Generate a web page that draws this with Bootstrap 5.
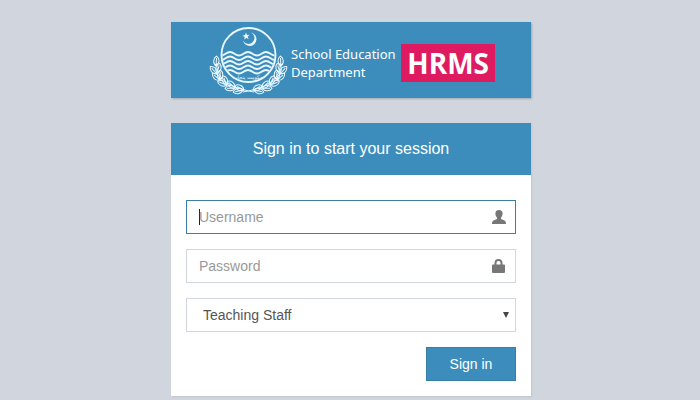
<!DOCTYPE html>
<html lang="en">
<head>
<meta charset="utf-8">
<meta name="viewport" content="width=device-width, initial-scale=1">
<title>School Education Department HRMS - Sign in</title>
<link href="https://cdn.jsdelivr.net/npm/bootstrap@5.3.0/dist/css/bootstrap.min.css" rel="stylesheet">
<style>
  body { background: #d1d6de; font-family: "Liberation Sans", Arial, sans-serif; font-size: 14px; color: #555; }
  .login-page { padding: 22px 0 4px 2px; }
  .login-box { max-width: 360px; gap: 25px; }
  .brand-bar { background: #3c8dbc; color: #fff; min-height: 76px; padding: 4px 36px 2px 38px; box-shadow: 1px 1px 2px #a0a8b2; }
  .brand-name { font: 13px/18px "Noto Sans", "Open Sans", sans-serif; flex: 1; padding: 4px 0 0 1px; white-space: nowrap; }
  .brand-tag { background: #de1a60; font: bold 28px/38px "Open Sans", sans-serif; padding: 0 6px; margin-top: 4px; }
  .login-title { background: #3c8dbc; color: #fff; font-size: 16px; line-height: 20px; padding: 16px; }
  .login-card { box-shadow: 1px 1px 2px #c0c6ce; }
  .login-form { padding: 25px 15px 15px; gap: 15px; }
  .login-form .form-control, .login-form .form-select { height: 34px; border-radius: 0; border-color: #d2d6de; font-size: 14px; line-height: 20px; padding: 6px 12px; color: #555; box-shadow: none; }
  .login-form .form-control { padding-right: 40px; caret-color: #222; }
  .login-form .form-control:focus { border-color: #3c7fa6; }
  .login-form .form-control:focus:placeholder-shown { caret-color: transparent; background: linear-gradient(#222, #222) 12px center / 1px 16px no-repeat #fff; }
  .login-form .form-control::placeholder { color: #999; }
  .login-form .form-select { padding-left: 16px; background-image: none; }
  .field-icon { right: 10px; width: 14px; height: 14px; color: #777; }
  .select-arrow { right: 7px; width: 6px; height: 6px; color: #444; }
  .field-icon svg, .select-arrow svg { display: block; width: 100%; height: 100%; }
  .btn-login { --bs-btn-bg: #3c8dbc; --bs-btn-border-color: #367fa9; --bs-btn-color: #fff; --bs-btn-hover-bg: #367fa9; --bs-btn-hover-color: #fff; width: 90px; height: 34px; padding: 6px 12px; font-size: 14px; line-height: 20px; }
</style>
<script src="https://cdn.jsdelivr.net/npm/bootstrap@5.3.0/dist/js/bootstrap.bundle.min.js"></script>
</head>
<body>
<main class="login-page">
  <div class="login-box mx-auto d-flex flex-column">
    <header class="brand-bar d-flex align-items-center">
      <svg class="flex-shrink-0" width="81" height="70" viewBox="0 0 81 70" fill="none" stroke="#e9f7ff" role="img" aria-label="Government of the Punjab emblem">
        <defs>
          <path id="leaf" d="M0 0C-4-3-3-8 0-10C3-8 4-3 0 0ZM0 0V-8" stroke-width="1"/>
          <g id="branch">
            <path d="M8 37C7 49 15 61 45 66" stroke-width="1"/>
            <use href="#leaf" transform="translate(7 40) rotate(4)"/>
            <use href="#leaf" transform="translate(8 48) rotate(-42)"/>
            <use href="#leaf" transform="translate(8 47) rotate(16)"/>
            <use href="#leaf" transform="translate(11 54) rotate(-50)"/>
            <use href="#leaf" transform="translate(11 54) rotate(2)"/>
            <use href="#leaf" transform="translate(18 59) rotate(-70)"/>
            <use href="#leaf" transform="translate(18 59) rotate(-24)"/>
            <use href="#leaf" transform="translate(26 62) rotate(-92)"/>
            <use href="#leaf" transform="translate(26 62) rotate(-48)"/>
            <use href="#leaf" transform="translate(34 64) rotate(-102)"/>
            <use href="#leaf" transform="translate(35 64) rotate(-64)"/>
          </g>
          <clipPath id="disc"><circle cx="39.500" cy="29" r="26"/></clipPath>
        </defs>
        <use href="#branch"/>
        <use href="#branch" transform="translate(79) scale(-1 1)"/>
        <circle cx="39.500" cy="29" r="27" fill="#3c8dbc" stroke-width="1.900"/>
        <g clip-path="url(#disc)" stroke-width="2">
          <path id="wave" d="M12 29.500C16 29.500 17 26 21 26S26 29.500 30 29.500S35 26 39 26S44 29.500 48 29.500S53 26 57 26S62 29.500 66 29.500"/>
          <use href="#wave" y="4.500"/>
          <use href="#wave" y="9"/>
          <use href="#wave" y="13.500"/>
          <use href="#wave" y="18"/>
        </g>
        <path d="M42 6.500A6.800 6.800 0 1 1 34 14.500A6 6 0 1 0 42 6.500Z" fill="#e9f7ff" stroke="none"/>
        <path d="M37 6.500L38 9L40.500 8.800L38.700 10.700L39.700 13L37.300 11.900L35.300 13.500L35.700 11L33.500 9.700L36 9.100Z" fill="#e9f7ff" stroke="none"/>
        <text x="39" y="53" text-anchor="middle" font-family="DejaVu Sans, sans-serif" font-size="5" fill="#e9f7ff" stroke="none">حکومت پنجاب</text>
      </svg>
      <div class="brand-name">School Education<br>Department</div>
      <div class="brand-tag flex-shrink-0">HRMS</div>
    </header>

    <section class="login-card bg-white">
      <h1 class="login-title text-center fw-normal mb-0">Sign in to start your session</h1>
      <form class="login-form d-flex flex-column">
        <div class="position-relative">
          <input class="form-control" id="username" type="text" placeholder="Username" aria-label="Username" autofocus>
          <label class="field-icon position-absolute top-50 translate-middle-y" for="username">
            <svg viewBox="0 0 14 14" fill="currentColor" aria-hidden="true"><path d="M7 0C9.400 0 10.600 1.500 10.600 3.500C10.600 5.200 9.900 6.700 9 7.700V9L12.500 10.500C13.600 11 14 12 14 14H0C0 12 .4 11 1.500 10.500L5 9V7.700C4.100 6.700 3.400 5.200 3.400 3.500C3.400 1.500 4.600 0 7 0Z"/></svg>
          </label>
        </div>
        <div class="position-relative">
          <input class="form-control" id="password" type="password" placeholder="Password" aria-label="Password">
          <label class="field-icon position-absolute top-50 translate-middle-y" for="password">
            <svg viewBox="0 0 14 14" fill="currentColor" aria-hidden="true"><path fill-rule="evenodd" d="M2.500 5.500V4C2.500 1.500 4 0 6.500 0S10.500 1.500 10.500 4V5.500H12Q13 5.500 13 6.500V13Q13 14 12 14H1Q0 14 0 13V6.500Q0 5.500 1 5.500ZM4.500 5.500H8.500V4C8.500 2.600 7.800 1.900 6.500 1.900S4.500 2.600 4.500 4Z"/></svg>
          </label>
        </div>
        <div class="position-relative">
          <select class="form-select" id="staff" aria-label="Staff type"><option>Teaching Staff</option></select>
          <label class="select-arrow position-absolute top-50 translate-middle-y pe-none" for="staff">
            <svg viewBox="0 0 6 6" fill="currentColor" aria-hidden="true"><path d="M0 0H6L3 6Z"/></svg>
          </label>
        </div>
        <button class="btn btn-login rounded-0 align-self-end" type="submit">Sign in</button>
      </form>
    </section>
  </div>
</main>
</body>
</html>
